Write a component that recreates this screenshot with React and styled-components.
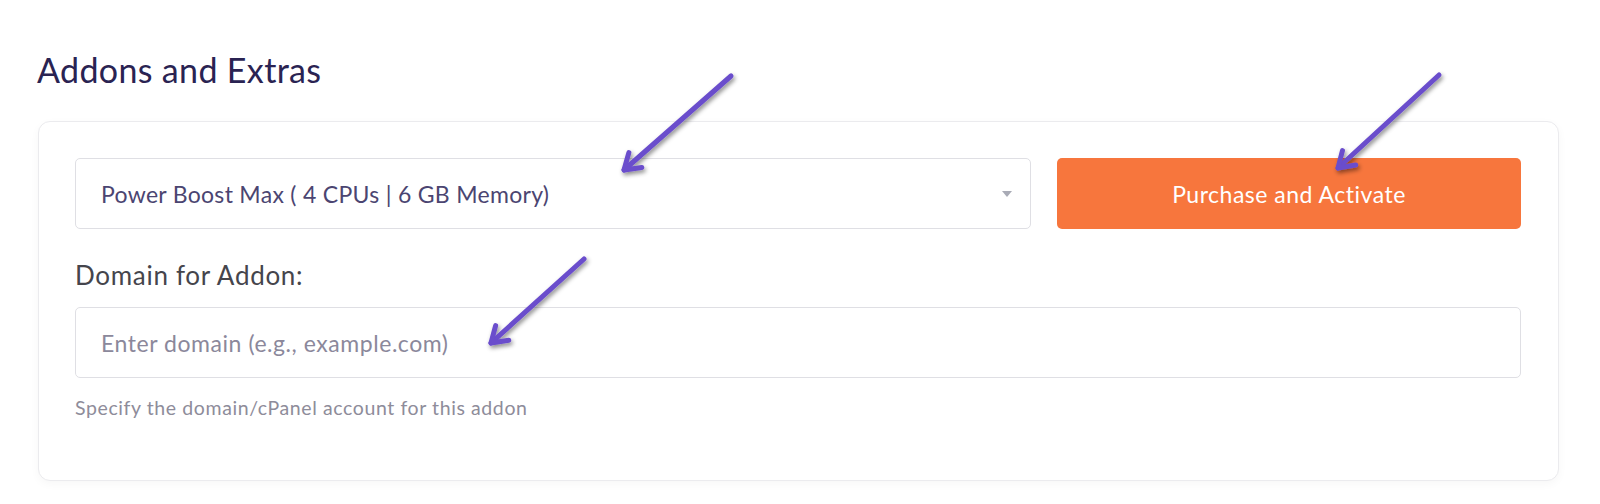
import React from "react";
import styled, { createGlobalStyle } from "styled-components";

const Global = createGlobalStyle`
  html, body { margin: 0; padding: 0; background: #ffffff; }
  body { font-family: Lato, "Noto Sans", sans-serif; -webkit-font-smoothing: antialiased; }
  * { box-sizing: border-box; }
`;

const Page = styled.div`
  position: relative;
  width: 1600px;
  height: 504px;
  padding: 50px 41px 0 38px;
  overflow: hidden;
`;

const Title = styled.h2`
  margin: 0 0 31px -1px;
  font-size: 34px;
  line-height: 40px;
  font-weight: 400;
  color: #2a2352;
  letter-spacing: 0.35px;
`;

const Card = styled.section`
  background: #ffffff;
  border: 1px solid #ebebee;
  border-radius: 12px;
  box-shadow: 0 3px 10px rgba(20, 20, 40, 0.035);
  padding: 36px 37px 60px 36px;
`;

const Row = styled.div`
  display: grid;
  grid-template-columns: 1fr 464px;
  column-gap: 26px;
`;

const SelectWrap = styled.div`
  position: relative;
  &::after {
    content: "";
    position: absolute;
    right: 19px;
    top: 50%;
    margin-top: -3px;
    border-left: 5px solid transparent;
    border-right: 5px solid transparent;
    border-top: 6px solid #a9abb6;
    pointer-events: none;
  }
`;

const Select = styled.select`
  appearance: none;
  -webkit-appearance: none;
  width: 100%;
  height: 71px;
  border: 1px solid #dfdfe4;
  border-radius: 5px;
  background: #ffffff;
  padding: 0 40px 0 25px;
  font-family: Lato, "Noto Sans", sans-serif;
  font-size: 23px;
  letter-spacing: 0.3px;
  color: #4b4571;
  outline: none;
`;

const Button = styled.button`
  height: 71px;
  border: none;
  border-radius: 5px;
  background: #f7763d;
  color: #ffffff;
  font-family: Lato, "Noto Sans", sans-serif;
  font-size: 23px;
  font-weight: 400;
  letter-spacing: 0.5px;
  cursor: pointer;
`;

const Label = styled.label`
  display: block;
  margin: 31px 0 17px 0;
  font-size: 26px;
  line-height: 30px;
  letter-spacing: 0.7px;
  color: #45454c;
`;

const Input = styled.input`
  display: block;
  width: 100%;
  height: 71px;
  border: 1px solid #dfdfe4;
  border-radius: 5px;
  padding: 0 25px;
  font-family: Lato, "Noto Sans", sans-serif;
  font-size: 23px;
  letter-spacing: 0.55px;
  color: #4b4571;
  outline: none;
  &::placeholder { color: #8b889b; }
`;

const Help = styled.p`
  margin: 18px 0 0 0;
  font-size: 19.5px;
  line-height: 24px;
  letter-spacing: 0.6px;
  color: #8e8c9a;
`;

const Overlay = styled.svg`
  position: absolute;
  left: 0;
  top: 0;
  pointer-events: none;
`;

function head(tail, tip, len = 18, deg = 33) {
  const dx = tail[0] - tip[0];
  const dy = tail[1] - tip[1];
  const d = Math.hypot(dx, dy);
  const ux = dx / d;
  const uy = dy / d;
  const a = (deg * Math.PI) / 180;
  const c = Math.cos(a);
  const s = Math.sin(a);
  const p1 = [tip[0] + len * (ux * c - uy * s), tip[1] + len * (ux * s + uy * c)];
  const p2 = [tip[0] + len * (ux * c + uy * s), tip[1] + len * (-ux * s + uy * c)];
  return `${p1[0]},${p1[1]} ${tip[0]},${tip[1]} ${p2[0]},${p2[1]}`;
}

const arrows = [
  { tail: [731, 76], tip: [624, 170] },
  { tail: [1439, 75], tip: [1338, 168] },
  { tail: [584, 259], tip: [491, 343] },
];

function Arrows() {
  return (
    <Overlay width="1600" height="504" viewBox="0 0 1600 504">
      <defs>
        <filter id="sh" x="-20%" y="-20%" width="140%" height="140%">
          <feDropShadow dx="1.5" dy="2.5" stdDeviation="2.2" floodColor="#000" floodOpacity="0.45" />
        </filter>
      </defs>
      {arrows.map((a, i) => (
        <g key={i} filter="url(#sh)" stroke="#6a4dcc" strokeWidth="5" strokeLinecap="round" strokeLinejoin="round" fill="none">
          <line x1={a.tail[0]} y1={a.tail[1]} x2={a.tip[0]} y2={a.tip[1]} />
          <polyline points={head(a.tail, a.tip)} />
        </g>
      ))}
    </Overlay>
  );
}

export default function App() {
  return (
    <>
      <Global />
      <Page>
        <Title>Addons and Extras</Title>
        <Card>
          <Row>
            <SelectWrap>
              <Select defaultValue="max">
                <option value="max">Power Boost Max ( 4 CPUs | 6 GB Memory)</option>
              </Select>
            </SelectWrap>
            <Button type="button">Purchase and Activate</Button>
          </Row>
          <Label htmlFor="domain">Domain for Addon:</Label>
          <Input id="domain" type="text" placeholder="Enter domain (e.g., example.com)" />
          <Help>Specify the domain/cPanel account for this addon</Help>
        </Card>
        <Arrows />
      </Page>
    </>
  );
}
